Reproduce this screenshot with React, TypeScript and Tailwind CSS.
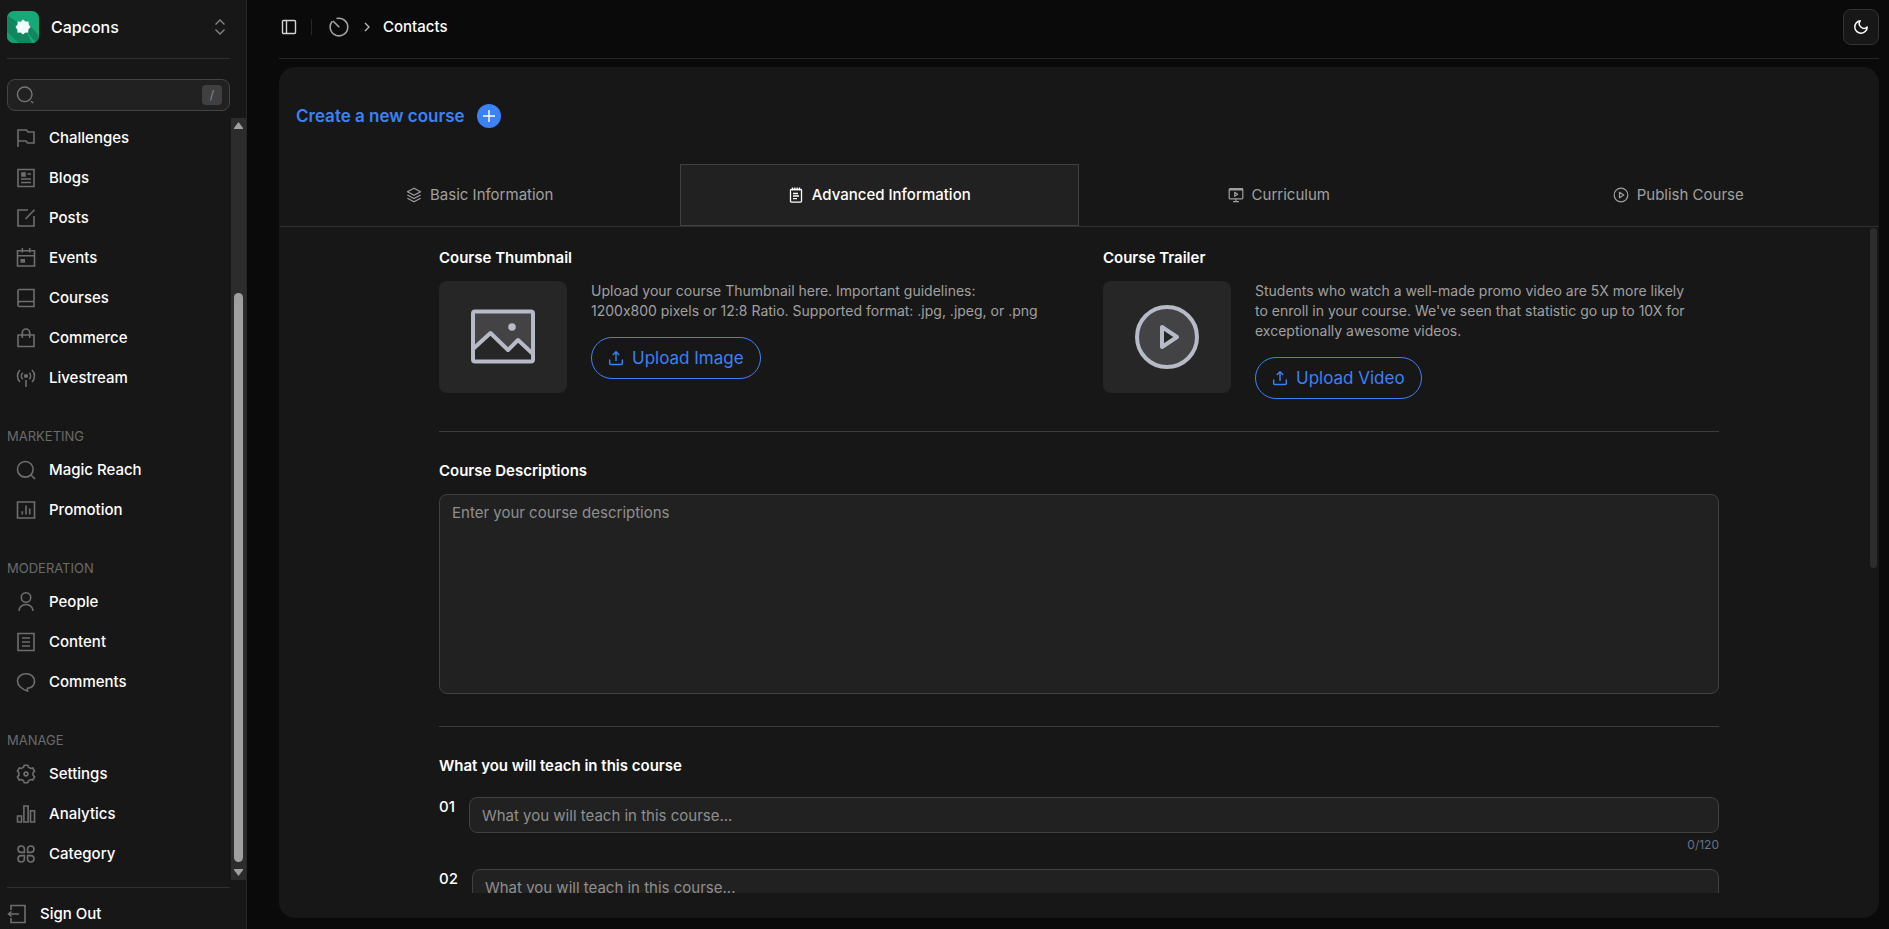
import type { ReactNode } from "react";

type NavItem = {
  label: string;
  icon: ReactNode;
};

type NavGroup = {
  title?: string;
  items: NavItem[];
};

const navGroups: NavGroup[] = [
  {
    items: [
      {
        label: "Challenges",
        icon: <path d="M2 19V2h8.500l1.500 2H18v11h-6.500L10 13H2" />,
      },
      {
        label: "Blogs",
        icon: (
          <>
            <path d="M2 1.500h16v17H2zM11.500 6H15M5 11h10M5 14.500h10" />
            <path d="M6 5h3v3H6z" fill="currentColor" />
          </>
        ),
      },
      {
        label: "Posts",
        icon: <path d="M12 2H2v16h16V8M9.500 11L18.500 1.800" />,
      },
      {
        label: "Events",
        icon: (
          <>
            <path d="M1.500 2.700h17v15.300h-17zM1.500 7.700h17M6.300 0v4.500M13.700 0v4.500" />
            <path d="M5.300 11.700h3v2.300h-3z" fill="currentColor" />
          </>
        ),
      },
      {
        label: "Courses",
        icon: (
          <path d="M3.500 1.500H18v17H3.500A1.500 1.500 0 0 1 2 17V3a1.500 1.500 0 0 1 1.500-1.500zM2 15.500a2 2 0 0 1 2-2h14" />
        ),
      },
      {
        label: "Commerce",
        icon: (
          <path d="M2 7h16v11.500H2zM6.300 10V4.700a3.700 3.700 0 0 1 7.400 0V10" />
        ),
      },
      {
        label: "Livestream",
        icon: (
          <>
            <path d="M10 12v7M6.700 11.200a4.700 4.700 0 0 1 0-6.400M13.300 4.800a4.700 4.700 0 0 1 0 6.400M4 14a8.500 8.500 0 0 1 0-12M16 2a8.500 8.500 0 0 1 0 12" />
            <circle cx="10" cy="8" r="1.300" fill="currentColor" />
          </>
        ),
      },
    ],
  },
  {
    title: "MARKETING",
    items: [
      {
        label: "Magic Reach",
        icon: (
          <>
            <circle cx="9.300" cy="9.300" r="7.800" />
            <path d="M15 15l4 4" />
          </>
        ),
      },
      {
        label: "Promotion",
        icon: (
          <path d="M1.500 2h17v16h-17zM6.300 11.300V14.500M10 5.500v9M13.700 8.500v6" />
        ),
      },
    ],
  },
  {
    title: "MODERATION",
    items: [
      {
        label: "People",
        icon: (
          <>
            <circle cx="10" cy="5.500" r="4.700" />
            <path d="M3 19a7 6.500 0 0 1 14 0" />
          </>
        ),
      },
      {
        label: "Content",
        icon: <path d="M2 1.500h16v17H2zM6 6h8M6 10h8M6 14h8" />,
      },
      {
        label: "Comments",
        icon: (
          <path d="M11.500 16.200v2.800C9.500 18.300 6.500 17 4.300 15 2.500 13.400 1.500 11.300 1.500 9c0-4.200 3.500-7.300 8.500-7.300s8.500 3.100 8.500 7.300c0 3.900-2.800 6.700-7 7.200z" />
        ),
      },
    ],
  },
  {
    title: "MANAGE",
    items: [
      {
        label: "Settings",
        icon: (
          <>
            <path d="M8.300 1.200h3.400l.8 2 2.100 1.300 2.100-.5 1.900 3.200-1.500 1.500v2.600l1.500 1.500-1.900 3.200-2.100-.5-2.100 1.300-.8 2H8.300l-.8-2-2.100-1.300-2.100.5-1.900-3.200 1.500-1.500V8.700L1.400 7.200 3.300 4l2.100.5 2.100-1.300z" />
            <circle cx="10" cy="10" r="1.900" />
          </>
        ),
      },
      {
        label: "Analytics",
        icon: (
          <path d="M1.500 12h4v6h-4zM7.900 2h4.200v16H7.900zM14.500 6.700h4V18h-4z" />
        ),
      },
      {
        label: "Category",
        icon: (
          <path d="M8.400 8.400H5.200A3.200 3.200 0 1 1 8.400 5zM11.600 8.400V5a3.200 3.200 0 1 1 3.200 3.400zM8.400 11.600V15a3.200 3.200 0 1 1-3.200-3.400zM11.600 11.600h3.200A3.200 3.200 0 1 1 11.600 15z" />
        ),
      },
    ],
  },
];

const tabs = [
  {
    label: "Basic Information",
    icon: (
      <path d="M8 1.200l6.600 3.500L8 8.200 1.400 4.700zM1.400 8L8 11.500 14.600 8M1.400 11.300L8 14.800l6.600-3.500" />
    ),
  },
  {
    label: "Advanced Information",
    active: true,
    icon: (
      <path
        strokeWidth="1.300"
        d="M3.300 2.500h9.400a.8.800 0 0 1 .8.800v11a.8.800 0 0 1-.8.800H3.300a.8.800 0 0 1-.8-.800v-11a.8.800 0 0 1 .8-.800zM4.500.5v3M6.800.5v3M9.200.5v3M11.500.5v3M5 6.500h5M5 9h6M5 11.700h4"
      />
    ),
  },
  {
    label: "Curriculum",
    icon: (
      <path d="M2 1.700h12a.8.800 0 0 1 .8.800v8.500a.8.800 0 0 1-.8.800H2a.8.800 0 0 1-.8-.800V2.500a.8.800 0 0 1 .8-.800zM1.200 2.800h13.600M8 12v2.500M5 14.700h6M6.700 5.300v4l3-2z" />
    ),
  },
  {
    label: "Publish Course",
    icon: (
      <>
        <circle cx="8" cy="8" r="6.800" />
        <path d="M6.500 5.300v5.400L10.700 8z" />
      </>
    ),
  },
];

function NavIcon({ children }: { children: ReactNode }) {
  return (
    <svg
      viewBox="0 0 20 20"
      className="size-5 shrink-0 text-[#6e6e6e]"
      fill="none"
      stroke="currentColor"
      strokeWidth="1.600"
      aria-hidden="true"
    >
      {children}
    </svg>
  );
}

function Logo() {
  return (
    <svg viewBox="0 0 32 32" className="size-8 shrink-0" aria-hidden="true">
      <defs>
        <clipPath id="logo-shape">
          <rect width="32" height="32" rx="7" />
        </clipPath>
      </defs>
      <g clipPath="url(#logo-shape)">
        <rect width="32" height="32" fill="#16a877" />
        <path d="M0 4l10 7 9-1 13 15v7H9L0 22z" fill="#12865f" />
        <path d="M0 21l12 11H0z" fill="#15a072" />
        <path d="M19 19l10 13h-4z" fill="#16a877" />
      </g>
      <path
        d="M16 8.500l2.400 2.100 3.100-.200.300 3.100L23.500 16l-2.100 2.400-.2 3.100-3.100.200L16 23.500l-2.400-1.900-3.100.100-.2-3.200L8.500 16l2-2.400.2-3.100 3.100.200z"
        fill="#f4fbfd"
      />
    </svg>
  );
}

function Sidebar() {
  return (
    <aside className="flex w-[247px] shrink-0 flex-col border-r border-[#262626] bg-[#171717]">
      <div className="mr-4 ml-[7px] flex h-[59px] shrink-0 items-start border-b border-[#303030] pt-[11px]">
        <button
          type="button"
          className="flex w-full items-center gap-3 text-left text-base font-medium"
        >
          <Logo />
          <span className="flex-1 leading-5">Capcons</span>
          <svg
            viewBox="0 0 16 16"
            className="mr-0.5 size-4 text-[#858585]"
            fill="none"
            stroke="currentColor"
            strokeWidth="1.400"
            aria-hidden="true"
          >
            <path d="M3.500 5.500L8 1l4.500 4.500M3.500 10.500L8 15l4.500-4.500" />
          </svg>
        </button>
      </div>

      <div className="mt-5 mr-4 ml-[7px] flex h-8 shrink-0 items-center rounded-lg border border-[#444] bg-[#212121] pr-[7px] pl-2">
        <svg
          viewBox="0 0 20 20"
          className="size-5 text-[#777]"
          fill="none"
          stroke="currentColor"
          strokeWidth="1.400"
          aria-hidden="true"
        >
          <circle cx="8.700" cy="9.300" r="7.300" />
          <path d="M15 16.200l2.200 1.800" />
        </svg>
        <input
          type="search"
          aria-label="Search"
          className="min-w-0 flex-1 bg-transparent px-2 text-sm outline-none"
        />
        <kbd className="flex size-5 items-center justify-center rounded bg-[#404040] font-[inherit] text-xs text-[#8a8a8a]">
          /
        </kbd>
      </div>

      <div className="mt-[7px] flex min-h-0 flex-1">
        <nav className="min-w-0 flex-1 overflow-y-auto pl-[7px] [scrollbar-width:none]">
          {navGroups.map((group) => (
            <section key={group.items[0].label}>
              {group.title && (
                <h2 className="mt-[30px] mb-1.5 text-[13px] leading-4 text-[#6b6b6b]">
                  {group.title}
                </h2>
              )}
              <ul>
                {group.items.map((item) => (
                  <li key={item.label}>
                    <a
                      href="#"
                      className="flex h-10 items-center gap-[13px] pl-[9px] text-[15px] font-medium"
                    >
                      <NavIcon>{item.icon}</NavIcon>
                      {item.label}
                    </a>
                  </li>
                ))}
              </ul>
            </section>
          ))}
        </nav>
        <div
          className="flex w-[15px] shrink-0 flex-col items-center bg-[#2c2c2c] py-1 text-[#9f9f9f]"
          aria-hidden="true"
        >
          <svg viewBox="0 0 9 8" className="h-2 w-[9px]" fill="currentColor">
            <path d="M4.500 0l4.500 6v1H0V6z" />
          </svg>
          <div className="mt-[163px] mb-1.5 w-[9px] flex-1 rounded-full bg-[#9f9f9f]" />
          <svg viewBox="0 0 9 8" className="h-2 w-[9px]" fill="currentColor">
            <path d="M4.500 8L9 2V1H0v1z" />
          </svg>
        </div>
      </div>

      <div className="mt-[7px] mr-4 ml-[7px] h-[42px] shrink-0 border-t border-[#303030] pt-4">
        <a
          href="#"
          className="flex items-center gap-[13px] text-[15px] leading-5 font-medium"
        >
          <NavIcon>
            <path d="M4 6V1.500h14v17H4V14M12 10H1.500M4.500 7.500L1.500 10l3 2.500" />
          </NavIcon>
          Sign Out
        </a>
      </div>
    </aside>
  );
}

function Header() {
  return (
    <header className="flex h-[59px] shrink-0 items-start justify-between border-b border-[#262626] pt-[9px]">
      <nav className="flex h-[27px] items-center pt-2 pl-0.5 text-[15px] font-medium">
        <button type="button" aria-label="Toggle sidebar">
          <svg
            viewBox="0 0 16 16"
            className="size-4 text-[#d4d4d4]"
            fill="none"
            stroke="currentColor"
            strokeWidth="1.400"
            aria-hidden="true"
          >
            <rect x="1.500" y="1.500" width="13" height="13" rx="1" />
            <path d="M5.500 1.500v13" />
          </svg>
        </button>
        <span className="ml-3.5 h-4 w-px bg-[#262626]" />
        <a href="#" aria-label="Dashboard" className="ml-[17px]">
          <svg
            viewBox="0 0 20 20"
            className="size-5 text-[#a3a3a3]"
            fill="none"
            stroke="currentColor"
            strokeWidth="1.600"
            aria-hidden="true"
          >
            <path d="M7.500 1.600A8.800 8.800 0 1 1 3.300 4.300M4 4l6.300 6.300" />
          </svg>
        </a>
        <svg
          viewBox="0 0 8 12"
          className="ml-3.5 h-3 w-2 text-[#b5b5b5]"
          fill="none"
          stroke="currentColor"
          strokeWidth="1.400"
          aria-hidden="true"
        >
          <path d="M2 2l4 4-4 4" />
        </svg>
        <span className="ml-3 leading-5">Contacts</span>
      </nav>
      <button
        type="button"
        aria-label="Toggle theme"
        className="flex size-9 items-center justify-center rounded-lg border border-[#333] bg-[#171717]"
      >
        <svg
          viewBox="0 0 16 16"
          className="size-4"
          fill="none"
          stroke="currentColor"
          strokeWidth="1.500"
          strokeLinejoin="round"
          aria-hidden="true"
        >
          <path d="M7.200 1.800A4.700 4.700 0 0 0 14.200 8 6.200 6.200 0 1 1 7.200 1.800z" />
        </svg>
      </button>
    </header>
  );
}

function UploadButton({ children }: { children: ReactNode }) {
  return (
    <button
      type="button"
      className="mt-4 flex h-[42px] items-center gap-2 rounded-full border border-[#3b82f6] px-4 text-[17px] leading-6 text-[#3b82f6]"
    >
      <svg
        viewBox="0 0 16 16"
        className="size-4"
        fill="none"
        stroke="currentColor"
        strokeWidth="1.400"
        aria-hidden="true"
      >
        <path d="M8 11V1.800M4.800 5L8 1.800 11.200 5M1.700 9.500v4a1 1 0 0 0 1 1h10.600a1 1 0 0 0 1-1v-4" />
      </svg>
      {children}
    </button>
  );
}

type MediaFieldProps = {
  title: string;
  description: ReactNode;
  action: string;
  preview: ReactNode;
};

function MediaField({ title, description, action, preview }: MediaFieldProps) {
  return (
    <section className="min-w-0 flex-1">
      <h3 className="mb-3 text-[15px] leading-[22px] font-semibold">{title}</h3>
      <div className="flex items-start gap-6">
        <div className="flex h-28 w-32 shrink-0 items-center justify-center rounded-lg bg-[#262626]">
          <svg
            viewBox="0 0 64 64"
            className="size-16 text-[#b7bac7]"
            fill="none"
            stroke="currentColor"
            strokeWidth="4"
            strokeLinejoin="round"
            aria-hidden="true"
          >
            {preview}
          </svg>
        </div>
        <div className="min-w-0 flex-1">
          <p className="text-sm leading-5 text-[#a0a0a0]">{description}</p>
          <UploadButton>{action}</UploadButton>
        </div>
      </div>
    </section>
  );
}

function TeachField({ number }: { number: string }) {
  return (
    <div className="flex gap-3.5">
      <label
        htmlFor={`teach-${number}`}
        className="text-[15px] leading-5 font-medium"
      >
        {number}
      </label>
      <div className="min-w-0 flex-1">
        <input
          id={`teach-${number}`}
          type="text"
          maxLength={120}
          placeholder="What you will teach in this course..."
          className="block h-9 w-full rounded-lg border border-[#404040] bg-[#212121] px-3 text-[15px] placeholder:text-[#8f8f8f]"
        />
        <p className="mt-1 text-right text-xs leading-4 text-[#64748b]">
          0/120
        </p>
      </div>
    </div>
  );
}

function CourseForm() {
  return (
    <form className="mx-auto w-4/5 pt-5">
      <div className="flex gap-12">
        <MediaField
          title="Course Thumbnail"
          description={
            <>
              Upload your course Thumbnail here. Important guidelines:
              <br />
              1200x800 pixels or 12:8 Ratio. Supported format: .jpg, .jpeg, or
              .png
            </>
          }
          action="Upload Image"
          preview={
            <>
              <path
                d="M2 47V7a2 2 0 0 1 2-2h56a2 2 0 0 1 2 2v44L47 36l-8.500 9L19 27z"
                fill="#434346"
                stroke="none"
              />
              <rect x="2" y="6.500" width="60" height="50" rx="2" />
              <path d="M2 44l17.500-16L37 45l10-10 15 14" />
              <circle cx="41" cy="22" r="3.800" fill="currentColor" stroke="none" />
            </>
          }
        />
        <MediaField
          title="Course Trailer"
          description={
            <>
              Students who watch a well-made promo video are 5X more likely
              <br />
              to enroll in your course. We've seen that statistic go up to 10X
              for
              <br />
              exceptionally awesome videos.
            </>
          }
          action="Upload Video"
          preview={
            <>
              <circle cx="32" cy="32" r="30" fill="#434346" />
              <path d="M27 22v20l15-10z" fill="#262626" />
            </>
          }
        />
      </div>

      <section className="mt-8 border-t border-[#3d3d3d] pt-7">
        <label
          htmlFor="descriptions"
          className="mb-3 block text-[15px] leading-[22px] font-semibold"
        >
          Course Descriptions
        </label>
        <textarea
          id="descriptions"
          placeholder="Enter your course descriptions"
          className="block h-[200px] w-full resize-none rounded-lg border border-[#404040] bg-[#212121] px-3 py-2 text-[15px] leading-5 placeholder:text-[#8f8f8f]"
        />
      </section>

      <section className="mt-8 border-t border-[#3d3d3d] pt-7">
        <h3 className="mb-5 text-[15px] leading-[22px] font-semibold">
          What you will teach in this course
        </h3>
        <div className="flex flex-col gap-4">
          <TeachField number="01" />
          <TeachField number="02" />
        </div>
      </section>
    </form>
  );
}

function App() {
  return (
    <div className="flex h-screen overflow-hidden bg-[#0a0a0a] font-['Inter',sans-serif] text-white [font-feature-settings:'calt'_0]">
      <Sidebar />
      <main className="flex min-w-0 flex-1 flex-col pr-2.5 pl-8">
        <Header />
        <div className="mt-2 mb-[11px] flex min-h-0 flex-1 flex-col rounded-2xl bg-[#171717] pb-[25px]">
          <div className="flex items-center gap-3 pt-[37px] pb-9 pl-[17px]">
            <h1 className="text-[17px] leading-6 font-semibold text-[#3b82f6]">
              Create a new course
            </h1>
            <button
              type="button"
              aria-label="Add course"
              className="flex size-6 items-center justify-center rounded-full bg-[#3b82f6]"
            >
              <svg
                viewBox="0 0 12 12"
                className="size-3"
                stroke="currentColor"
                strokeWidth="1.400"
                aria-hidden="true"
              >
                <path d="M6 0v12M0 6h12" />
              </svg>
            </button>
          </div>

          <div role="tablist" className="mx-px flex border-b border-[#303030]">
            {tabs.map((tab) => (
              <button
                key={tab.label}
                type="button"
                role="tab"
                aria-selected={!!tab.active}
                className={`flex h-[62px] flex-1 items-center justify-center gap-2 border text-[15px] ${
                  tab.active
                    ? "border-[#404040] bg-[#212121] font-medium text-white"
                    : "border-transparent text-[#a0a0a0]"
                }`}
              >
                <svg
                  viewBox="0 0 16 16"
                  className="size-4"
                  fill="none"
                  stroke="currentColor"
                  strokeWidth="1.200"
                  strokeLinejoin="round"
                  aria-hidden="true"
                >
                  {tab.icon}
                </svg>
                {tab.label}
              </button>
            ))}
          </div>

          <div className="relative min-h-0 flex-1">
            <div className="h-full overflow-y-auto [scrollbar-width:none]">
              <CourseForm />
            </div>
            <div
              className="absolute top-px right-0.5 h-[51%] w-[7px] rounded-full bg-[#2c2d2d]"
              aria-hidden="true"
            />
          </div>
        </div>
      </main>
    </div>
  );
}

export default App;
